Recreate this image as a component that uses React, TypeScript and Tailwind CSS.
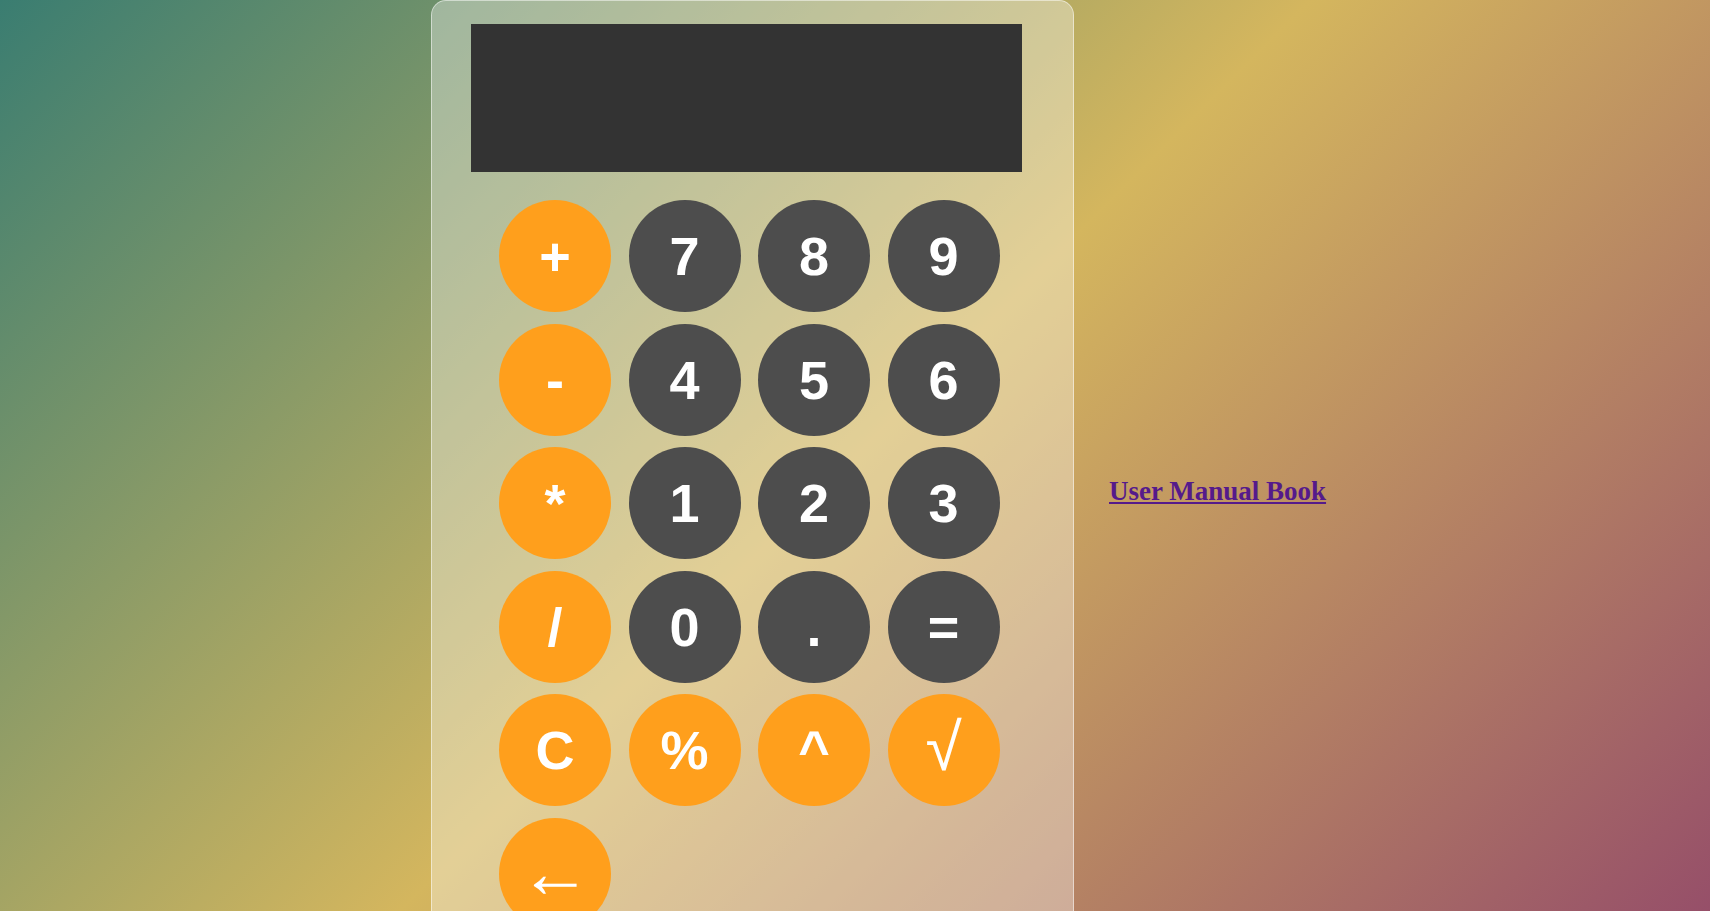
const keys = [
  { label: "+", kind: "op" },
  { label: "7", kind: "num" },
  { label: "8", kind: "num" },
  { label: "9", kind: "num" },
  { label: "-", kind: "op" },
  { label: "4", kind: "num" },
  { label: "5", kind: "num" },
  { label: "6", kind: "num" },
  { label: "*", kind: "op" },
  { label: "1", kind: "num" },
  { label: "2", kind: "num" },
  { label: "3", kind: "num" },
  { label: "/", kind: "op" },
  { label: "0", kind: "num" },
  { label: ".", kind: "num" },
  { label: "=", kind: "num" },
  { label: "C", kind: "op" },
  { label: "%", kind: "op" },
  { label: "^", kind: "op" },
  { label: "√", kind: "root" },
  { label: "←", kind: "arrow" },
];

const base =
  "w-[112px] h-[112px] rounded-full text-white leading-none flex items-center justify-center";

function keyClass(kind: string) {
  if (kind === "num") return base + " bg-[#4d4d4d] text-[54px] font-bold";
  if (kind === "op") return base + " bg-[#ff9f1c] text-[54px] font-bold";
  if (kind === "root") return base + " bg-[#ff9f1c] text-[66px] font-normal pb-[6px]";
  return base + " bg-[#ff9f1c] text-[72px] font-normal pb-[4px]";
}

export default function App() {
  return (
    <div className="h-[911px] overflow-hidden bg-[linear-gradient(135deg,#3a7d71,#d4b65e,#964f69)] font-['Liberation_Sans',Arial,sans-serif]">
      <div className="flex items-start">
        {/* Calculator card */}
        <div className="ml-[431px] w-[643px] h-[990px] shrink-0 rounded-[15px] border border-white/50 bg-white/35">
          {/* Display */}
          <div className="ml-[39px] mt-[23px] w-[551px] h-[148px] bg-[#333333]" />

          {/* Keypad */}
          <div className="ml-[67px] mt-[28px] grid grid-cols-[repeat(4,112px)] gap-x-[17.5px] gap-y-[11.5px]">
            {keys.map((k) => (
              <button key={k.label} className={keyClass(k.kind)}>
                {k.label}
              </button>
            ))}
          </div>
        </div>

        {/* Manual link */}
        <a
          href="#"
          className="ml-[35px] mt-[478px] block text-[27px] leading-none font-bold text-[#551a8b] underline font-['Liberation_Serif','Times_New_Roman',serif]"
        >
          User Manual Book
        </a>
      </div>
    </div>
  );
}
